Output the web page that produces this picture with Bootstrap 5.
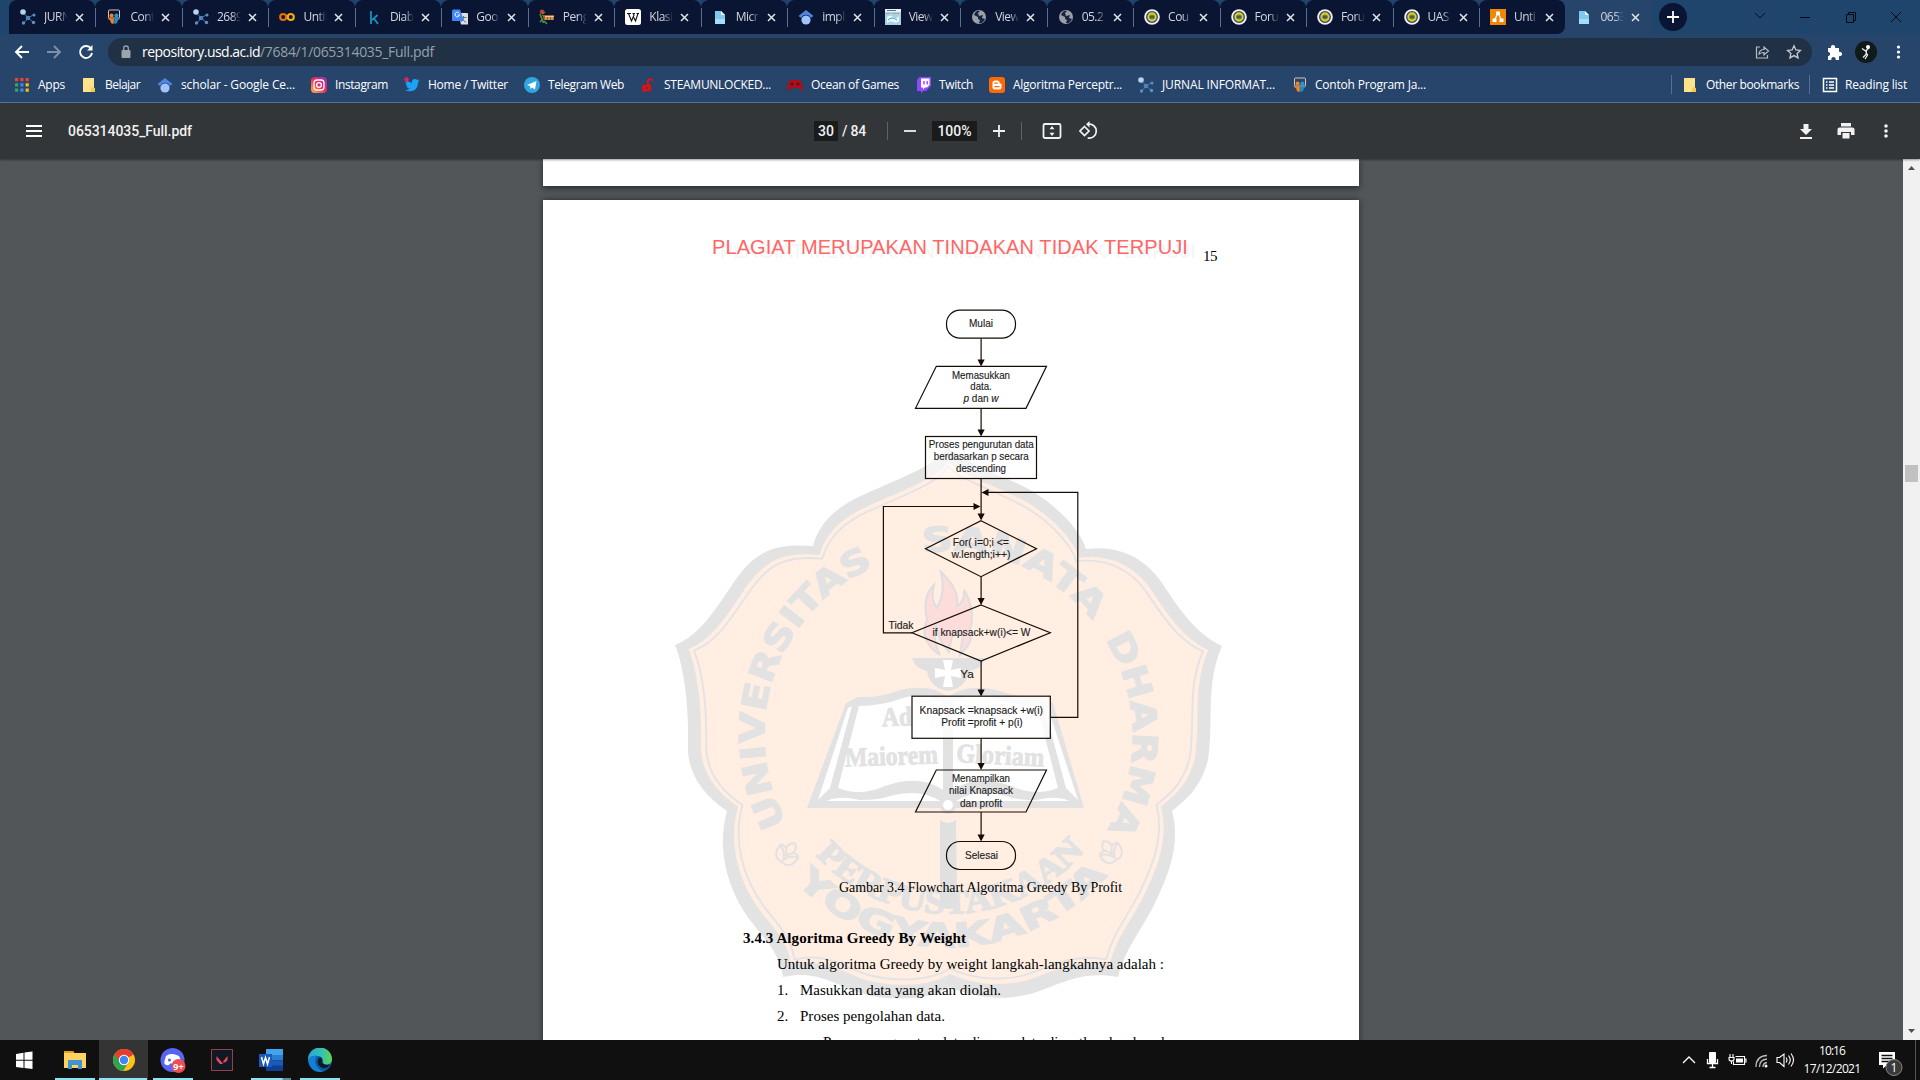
<!DOCTYPE html>
<html lang="id">
<head>
<meta charset="utf-8">
<title>065314035_Full.pdf</title>
<link rel="stylesheet" href="https://cdn.jsdelivr.net/npm/bootstrap@5.3.0/dist/css/bootstrap.min.css">
<style>
body{width:1920px;height:1080px;overflow:hidden;background:#525659;font-family:"Open Sans","Noto Sans",sans-serif;font-size:12px;line-height:16px;color:#fff}
svg{display:block;flex:none}
.fit{display:inline-block;white-space:nowrap;flex:none}
.tabstrip{height:34px;background:#20456c;padding-left:9px}
.btab{width:86.47px;height:34px;background:#0a1433;border-radius:8px 8px 0 0;padding-left:11px;flex:none;position:relative;color:#d3d6dc}
.btab.current{background:#27446b}
.btab.before-current{border-bottom-right-radius:8px}
.btab .cap{width:24px;margin-left:8px;overflow:hidden;white-space:nowrap;-webkit-mask-image:linear-gradient(90deg,#000 60%,transparent);mask-image:linear-gradient(90deg,#000 60%,transparent);letter-spacing:-.5px}
.btab .x{margin-left:7px}
.tab-bg{background:#27446b}
.newtab{width:28px;height:28px;background:#0a1433;margin-left:7px}
.winctl{margin-left:66px;gap:31.5px;color:#050a12}
.navline{height:36px;background:#27446b;padding-left:14px}
.omni{width:1704px;height:28px;border-radius:14px;background:#213145;margin-left:14px;padding:0 10px 0 12px;font-size:14px}
.omni .rest{color:#93a0ad}
.marks{height:33px;background:#27446b;border-bottom:1px solid #5a7797;padding:0 0 3px 14px}
.bm{flex:none}
.vline{width:1px;height:19px;background:#58708f}
.pdfbar{height:56px;background:#323639;font-family:Roboto,sans-serif;font-weight:500;font-size:14px;color:#f1f1f1;padding-left:26px;position:relative;z-index:2;box-shadow:0 1px 2px #0006}
.field{background:#191b1c;height:20px;line-height:20px;text-align:center}
.pdfbar .vline{background:#5f6265;height:18px}
.viewer{height:881px;background:#525659}
.sheets{width:816px;margin-left:543px}
.sheet-prev{height:27px;background:#fff;box-shadow:0 2px 6px #0008}
.sheet{height:854px;margin-top:14px;background:#fff;position:relative;box-shadow:0 0 6px #0008;overflow:hidden;color:#000;font-family:"Liberation Serif",serif;font-size:15px;line-height:26px}
.sheet>.art{position:absolute;left:0;top:0}
.sheet .txt{position:relative}
.heading-red{font-family:"Liberation Sans",sans-serif;font-size:20px;color:#f66;margin:34px 0 0 169px;line-height:26px;text-shadow:8px 4px 0 #f5f5f5}
.pageno{margin:43px 0 0 15px;height:26px;letter-spacing:-.5px}
.caption{margin:606px 0 0 296px;height:26px;font-size:14px}
.body-copy{margin:24px 0 0 200px}
.indent{padding-left:34px}
.scroll{width:17px;background:#f1f1f1}
.thumb{width:13px;height:17px;background:#c1c1c1}
.task{height:40px;background:#101010}
.slot{width:49px;height:40px;position:relative;flex:none}
.slot.on::after{content:"";position:absolute;bottom:0;left:4.5px;width:40px;height:2px;background:#8ee3f0}
.slot.live{background:#343434}
.slot.live::after{left:0;width:48px}
.slot.word::after{width:40px;background:linear-gradient(90deg,#8ee3f0 31px,#5b8f97 32px)}
.clock{width:70px;line-height:18px;padding-top:2px}
</style>
<script src="https://cdn.jsdelivr.net/npm/bootstrap@5.3.0/dist/js/bootstrap.bundle.min.js"></script>
</head>
<body>
<svg width="0" height="0" class="position-absolute">
<symbol id="net" viewBox="0 0 16 16"><path d="M3 3l5 6 5-3M8 9l-4 5M8 9l5 4" stroke="#4878ab" stroke-width="1" fill="none"/><circle cx="3" cy="3" r="2.8" fill="#b5d5ee"/><circle cx="8" cy="9" r="2.3" fill="#4f83b8"/><circle cx="14" cy="6" r="1.5" fill="#5c91c4"/><circle cx="3.5" cy="14" r="1.7" fill="#5c91c4"/><circle cx="13.5" cy="13.5" r="1.7" fill="#5c91c4"/></symbol>
<symbol id="ss" viewBox="0 0 16 16"><rect x="2.5" y="1" width="11" height="8" rx="1" fill="none" stroke="#d8c8b0"/><circle cx="5.600" cy="6.500" r="2" fill="#f58220"/><circle cx="10.400" cy="6.500" r="2" fill="#1e9bd7"/><path d="M1.500 8.500q3 2 6.300.700V14.500q-3 1-3.500-3Q2 10.500 1.500 8.500z" fill="#f58220"/><path d="M14.500 8.500q-3 2-6.300.700V14.500q3 1 3.500-3Q14 10.500 14.500 8.500z" fill="#1e8fc7"/></symbol>
<symbol id="co" viewBox="0 0 16 16"><circle cx="4.200" cy="8" r="3" fill="none" stroke="#e8710a" stroke-width="2.200"/><circle cx="11.800" cy="8" r="3" fill="none" stroke="#f9ab00" stroke-width="2.200"/></symbol>
<symbol id="kg" viewBox="0 0 16 16"><path d="M5 2v13M11.500 6L6 11.200M8 9.500l4 5.500" stroke="#1496bb" stroke-width="1.800" fill="none"/></symbol>
<symbol id="tr" viewBox="0 0 16 16"><path d="M6 4h9a1 1 0 011 1v10.500H9z" fill="#dcdfe3"/><path d="M8.500 8.500h6M11.500 7v1.500q0 3-3 4.500M10 10l4 3.500" stroke="#70757a" fill="none"/><path d="M1 .5h7l4 11.500H1a1 1 0 01-1-1V1.500z" fill="#4285f4"/><path d="M7.300 4.300a2.300 2.300 0 10.300 1.700H5.500" stroke="#fff" fill="none"/></symbol>
<symbol id="jm" viewBox="0 0 16 16"><path d="M3 6h12v5H5z" fill="#a8602a"/><circle cx="3" cy="2.800" r="2.200" fill="#d33a2c"/><path d="M1 5l3.500 9M4 10l-3 3m4-1l3 3M3 5l3-2" stroke="#4a9a3a" stroke-width="1.500"/><path d="M6 7.500h9M7 8v3M10 8v3M13 8v3" stroke="#f0c890"/></symbol>
<symbol id="wk" viewBox="0 0 16 16"><rect width="16" height="16" rx="2.500" fill="#fff"/><path d="M2 4.500h4M7.500 4.500H10M11.500 4.500H14M3.500 4.500L6.500 12 9 6 8 4.500M8 7l2.500 5 2.500-7.500" stroke="#111" stroke-width="1.100" fill="none"/></symbol>
<symbol id="doc" viewBox="0 0 16 16"><path d="M3 2h6l4 4v9H3z" fill="#7fc8ee"/><path d="M9 2l4 4H9z" fill="#e5f5fd"/><path d="M3 10h10v5H3z" fill="#a5dcf8"/></symbol>
<symbol id="sch" viewBox="0 0 16 16"><circle cx="8" cy="11" r="4.600" fill="#a0c3ff"/><path d="M8 1l7.500 6-2.800 2a5 5 0 00-9.400 0L.5 7z" fill="#4f86e4"/></symbol>
<symbol id="vw" viewBox="0 0 16 16"><rect width="16" height="16" fill="#a9d3e4"/><path d="M0 0h16v3H0z" fill="#e8f3f5"/><path d="M1 4.500h4M7 4.500h7" stroke="#c99"/><path d="M2 8q3-3 6 0t6-1v5q-3 3-6 1t-6 1z" fill="#eaf8ff"/><path d="M3 11q4-4 9 0" stroke="#3c9fc5" fill="none"/><path d="M2 1.500h9" stroke="#3b7ca8"/></symbol>
<symbol id="gl" viewBox="0 0 16 16"><circle cx="8" cy="8" r="7" fill="#9aa0a6"/><path d="M3 6l4 2v2l2 1-1 3q4 1 6-4l-3-1 1-3-4 1-1-3 2-2q-4-1-6 4z" fill="#182442"/></symbol>
<symbol id="usd" viewBox="0 0 16 16"><circle cx="8" cy="8" r="7.800" fill="#f4f1e2"/><circle cx="8" cy="8" r="5.300" fill="#dcd318" stroke="#324291" stroke-width="1.300"/><path d="M5.500 6.500q2.500-2 5 0v3q-2.500 2-5 0z" fill="#69823c"/><path d="M5.500 8h5" stroke="#263a79"/></symbol>
<symbol id="dio" viewBox="0 0 16 16"><rect width="16" height="16" fill="#f08705"/><path d="M8 4L4.500 11M8 4l3.500 7" stroke="#fff" stroke-width="1.300"/><path d="M6 2.500h4v3.500H6zM2.500 9.500h4V13h-4zM9.500 9.500h4V13h-4z" fill="#fff"/></symbol>
<symbol id="apps" viewBox="0 0 16 16"><g fill="#ea4335"><path d="M1 1h3.200v3.200H1zM6.300 1h3.200v3.200H6.300zM11.600 1h3.200v3.200h-3.200z"/></g><path d="M1 6.300h3.200v3.200H1zM1 11.600h3.200v3.200H1z" fill="#34a853"/><path d="M6.300 6.300h3.200v3.200H6.300zM6.300 11.600h3.200v3.200H6.300z" fill="#4285f4"/><path d="M11.600 6.300h3.200v3.200h-3.200zM11.600 11.600h3.200v3.200h-3.200z" fill="#fbbc04"/></symbol>
<symbol id="fo" viewBox="0 0 16 16"><path d="M0 1h11v14H0z" fill="#ffe28a"/><path d="M9 10l3 1v4H7.500z" fill="#f6c945"/></symbol>
<symbol id="ig" viewBox="0 0 16 16"><rect width="16" height="16" rx="4" fill="url(#igg)"/><rect x="3" y="3" width="10" height="10" rx="3" fill="none" stroke="#fff" stroke-width="1.300"/><circle cx="8" cy="8" r="2.400" fill="none" stroke="#fff" stroke-width="1.300"/></symbol>
<defs><linearGradient id="igg" x1="0" y1="1" x2="1" y2="0"><stop offset="0" stop-color="#fdc042"/><stop offset=".5" stop-color="#ee2a5b"/><stop offset="1" stop-color="#8237c8"/></linearGradient></defs>
<symbol id="tw" viewBox="0 0 16 16"><path d="M1 13q3 .2 4.500-1.200-2.200-.3-3-2.200h1.300Q1.500 8.500 1.600 6.300l1.300.4Q1 4.800 2.200 2.500 4.500 5.500 8 5.700 7.500 2 11 2q1.200 0 2.200 1l2-.8-1.200 1.700 1.700-.4-1.600 1.700Q14 13.500 6.500 14.200 3.500 14.500 1 13z" fill="#1da1f2"/><circle cx="2.500" cy="2.500" r="2.200" fill="#e0245e"/></symbol>
<symbol id="tg" viewBox="0 0 16 16"><circle cx="8" cy="8" r="8" fill="#2fa6df"/><path d="M3 8l9.500-4L11 12.500 8 10.500 6.500 12 6 9z" fill="#fff"/></symbol>
<symbol id="un" viewBox="0 0 16 16"><path d="M0 8.500l8.500-1.500 1 6.500-8.500 1.500z" fill="#f00c0c"/><path d="M6 7.500l-.3-2.500q0-2.500 2.300-2.800 2.200 0 2.500 2" stroke="#f00c0c" stroke-width="1.700" fill="none"/><circle cx="4.800" cy="11" r="1.200" fill="#27446b"/></symbol>
<symbol id="pad" viewBox="0 0 16 16"><path d="M3 3h10q3 4 3 9 0 2-2 1.500L11.500 11h-7L2 13.500Q0 14 0 12 0 7 3 3z" fill="#a90f1a"/><circle cx="5" cy="7" r="1.300" fill="#5c0a14"/><circle cx="11" cy="7" r="1.300" fill="#5c0a14"/></symbol>
<symbol id="tch" viewBox="0 0 16 16"><path d="M3.500 0H15v9l-5 5H7.500L5 16.500V14H1V3z" fill="#9146ff"/><path d="M5 1.500h8.500V8L11 10.500H9L7 12.500v-2H5z" fill="#fff"/><path d="M8 4v3.500M11.200 4v3.500" stroke="#9146ff" stroke-width="1.400"/></symbol>
<symbol id="blg" viewBox="0 0 16 16"><rect width="16" height="16" rx="3" fill="#ff6a00"/><path d="M3.500 6q0-2.500 2.500-2.500h2.500q2 0 2.300 2.500.2.700 1.200.8.500 0 .5 1V10q0 2.500-2.500 2.500H6Q3.500 12.500 3.500 10z" fill="#fff"/><path d="M6 6.200h2.200M6 9.700h4" stroke="#ff6a00" stroke-width="1.300" stroke-linecap="round"/></symbol>
<symbol id="rd" viewBox="0 0 16 16"><rect x="1.500" y="1.500" width="13" height="13" fill="none" stroke="#fff" stroke-width="1.500"/><path d="M4 5h1.500M7 5h5M4 8h1.500M7 8h5M4 11h1.500M7 11h5" stroke="#fff" stroke-width="1.300"/></symbol>
</svg>

<div class="d-flex flex-column">
<header>
 <div class="tabstrip d-flex align-items-center">
  <div id="tabs" class="d-flex"></div>
  <div class="newtab rounded-circle d-flex align-items-center justify-content-center"><svg width="14" height="14"><path d="M7 1v12M1 7h12" stroke="#fff" stroke-width="1.800"/></svg></div>
  <div class="winctl d-flex align-items-center">
   <svg width="14" height="12" stroke="currentColor" fill="none"><path d="M2 2l5 5 5-5"/></svg>
   <svg width="14" height="12" stroke="currentColor"><path d="M2 6.500h10"/></svg>
   <svg width="14" height="12" stroke="currentColor" fill="none"><path d="M2.500 3.500h7v8h-7zM4.500 3.500v-2h7v8h-2"/></svg>
   <svg width="14" height="12" stroke="currentColor"><path d="M2 1l10 10M12 1L2 11"/></svg>
  </div>
 </div>
 <div class="navline d-flex align-items-center">
  <svg width="80" height="20" fill="none" stroke="#fff" stroke-width="1.900"><path d="M15 10H2.500M8 4l-6 6 6 6"/><path d="M33 10h12.500M40 4l6 6-6 6" stroke="#7e90a8"/><path d="M77 6.500A6 6 0 1078 11"/><path d="M78.500 3v5.500H73z" fill="#fff" stroke="none"/></svg>
  <div class="omni d-flex align-items-center">
   <svg width="12" height="16"><rect x="1.500" y="6" width="9" height="8" rx="1" fill="#9ba3ad"/><path d="M3.700 6V4q0-2 2.300-2t2.300 2v2" stroke="#9ba3ad" stroke-width="1.300" fill="none"/></svg>
   <span class="fit" style="margin-left:10px" data-w="118">repository.usd.ac.id</span><span class="fit rest" data-w="174">/7684/1/065314035_Full.pdf</span>
   <div class="ms-auto d-flex" style="gap:16px"><svg width="16" height="16" fill="none" stroke="#b5bec9" stroke-width="1.200"><path d="M6 3H2.500v11h11v-3M5 10q.5-4.500 5-4.500V3l4.500 4-4.500 4V8.500Q7 8.500 5 10z"/></svg>
   <svg width="16" height="16" fill="none" stroke="#c6cdd6" stroke-width="1.300"><path d="M8 1.800l1.900 4.100 4.500.5-3.300 3 .9 4.500L8 11.600l-4 2.300.9-4.500-3.300-3 4.500-.5z"/></svg></div>
  </div>
  <svg class="ms-3" width="90" height="26"><g transform="translate(-2 5)" fill="#fff"><path d="M1 4h4a2.200 2.200 0 114 0h4v4a2.200 2.200 0 110 4v4H9.500a2.200 2.200 0 10-4 0H1v-4a2.200 2.200 0 100-4z"/></g><circle cx="38" cy="13" r="11" fill="#101a18"/><path d="M34 9.500l3.500 2.500L41 9M38.500 11.500l-.5 4-3 3M38 13.500l1.500 2.500-2.500 4" stroke="#eee" stroke-width="1.300" fill="none"/><circle cx="40" cy="8" r="2" fill="#fff"/><g fill="#fff"><circle cx="70.500" cy="8" r="1.600"/><circle cx="70.500" cy="13" r="1.600"/><circle cx="70.500" cy="18" r="1.600"/></g></svg>
 </div>
 <div class="marks d-flex align-items-center" id="marks"></div>
 <div class="pdfbar d-flex align-items-center">
  <svg width="16" height="14" stroke="#fff" stroke-width="2"><path d="M0 2h16M0 7h16M0 12h16"/></svg>
  <span class="fit" style="margin-left:26px" data-w="124">065314035_Full.pdf</span>
  <div class="d-flex align-items-center" style="margin-left:622px">
   <div class="field" style="width:24px">30</div><span class="fit ms-1" data-w="24">/ 84</span>
   <div class="vline" style="margin-left:21px"></div>
   <svg style="margin-left:16px" width="12" height="12"><path d="M0 6h12" stroke="#f1f1f1" stroke-width="1.800"/></svg>
   <div class="field" style="width:45px;margin-left:16px">100%</div>
   <svg style="margin-left:16px" width="12" height="12"><path d="M0 6h12M6 0v12" stroke="#f1f1f1" stroke-width="1.800"/></svg>
   <div class="vline" style="margin-left:16px"></div>
   <svg style="margin-left:20px" width="20" height="18"><rect x="1.500" y="2" width="17" height="14" rx="1.500" fill="none" stroke="#f1f1f1" stroke-width="1.800"/><path d="M10 4l2.500 3.300h-5zM10 14l2.500-3.300h-5z" fill="#f1f1f1"/></svg>
   <svg style="margin-left:17px" width="20" height="20" fill="none" stroke="#f1f1f1" stroke-width="1.700"><path d="M5.500 5.500L10 10l-4.500 4.500L1 10z"/><path d="M9 3.200a7 7 0 11-.3 13.700"/><path d="M10.500 0v6.500L7 3.300z" fill="#f1f1f1" stroke="none"/></svg>
  </div>
  <div class="ms-auto d-flex align-items-center" style="padding-right:30px;gap:25px">
   <svg width="14" height="18" fill="#f1f1f1" style="margin-right:-1px"><path d="M4.500 2h5v5H13l-6 6-6-6h3.500zM1 15h12v2H1z"/></svg>
   <svg width="18" height="18" fill="#f1f1f1"><path d="M4 1h10v3.500H4zM2.500 5.500h13q2 0 2 2V13H14v-3H4v3H.5V7.500q0-2 2-2zM5.500 11h7v5.500h-7z"/></svg>
   <svg width="10" height="18" fill="#f1f1f1"><circle cx="6" cy="4" r="1.800"/><circle cx="6" cy="9" r="1.800"/><circle cx="6" cy="14" r="1.800"/></svg>
  </div>
 </div>
</header>

<main class="viewer d-flex justify-content-between overflow-hidden">
 <div class="sheets">
  <div class="sheet-prev"></div>
  <article class="sheet">
   <svg class="art" width="816" height="854" viewBox="543 200 816 854">
    <defs>
     <path id="crest" d="M948 447C960 462 1010 477 1035 493C1065 512 1082 535 1086 549C1120 545 1143 558 1160 580C1180 610 1195 633 1222 646C1205 685 1214 720 1208 760C1200 790 1185 800 1172 811C1180 840 1172 870 1152 909C1138 935 1125 950 1118 977C1080 970 1060 985 1030 994C1000 1002 970 996 950 987C930 1000 890 1002 860 993C830 982 815 970 783 977C778 950 765 940 750 920C728 890 716 850 727 811C700 793 687 770 688 745C689 710 685 670 675 645C700 635 715 610 732 585C755 550 775 543 813 546C820 520 840 505 865 494C900 478 938 465 948 447Z"/>
     <path id="ringA" d="M786.400 822.900A184 184 0 0 1 894.200 559"/>
     <path id="ringB" d="M922.400 552.800A184 184 0 0 1 1095 624.300"/>
     <path id="ringC" d="M1105 639.300A184 184 0 0 1 1106 831.700"/>
     <path id="ringD" d="M815.700 855A179 179 0 0 0 1085.100 849.800"/>
     <path id="ringE" d="M795.500 881.900A212 212 0 0 0 1107.900 874.200"/>
     <g id="petal" fill="none" stroke="#e2e2e3" stroke-width="2"><path d="M0-12Q6-8 4-3Q9-5 11-2Q12 8 5 11H-5Q-12 8-11-2Q-9-5-4-3Q-6-8 0-12ZM-11-2Q-3 0 0 8Q3 0 11-2M-4-3L0 3 4-3"/></g>
    </defs>
    <g id="watermark">
     <use href="#crest" fill="#e3e3e3"/>
     <use href="#crest" fill="#ffeee1" transform="translate(948 725) scale(.95) translate(-948 -725)"/>
     <use href="#crest" fill="none" stroke="#e3e3e6" stroke-width="2" transform="translate(948 725) scale(.93) translate(-948 -725)"/>
     <g fill="#e2e2e3" stroke="#e2e2e3" stroke-width="1.200" font-family="DejaVu Sans, sans-serif" font-weight="700" font-size="34">
      <text><textPath href="#ringA" textLength="304" lengthAdjust="spacingAndGlyphs">UNIVERSITAS</textPath></text>
      <text><textPath href="#ringB" textLength="191" lengthAdjust="spacingAndGlyphs">SANATA</textPath></text>
      <text><textPath href="#ringC" textLength="200" lengthAdjust="spacingAndGlyphs">DHARMA</textPath></text>
      <text font-family="Liberation Serif, serif" font-size="34" stroke-width="1.500"><textPath href="#ringD" textLength="304" lengthAdjust="spacingAndGlyphs">PERPUSTAKAAN</textPath></text>
      <text font-size="33"><textPath href="#ringE" textLength="350" lengthAdjust="spacingAndGlyphs">YOGYAKARTA</textPath></text>
     </g>
     <use href="#petal" transform="translate(788 853) rotate(35)"/><use href="#petal" transform="translate(1110 851) rotate(-35)"/>
     <g stroke="#dedee0" stroke-width="2" fill="#fddcdc"><path d="M940 655Q918 640 927 620Q922 596 934 585Q930 600 937 608Q946 592 941 572Q960 590 957 606Q965 602 964 590Q976 610 970 630Q975 640 960 655L963 635Q952 625 949 652Q938 640 936 625Q932 640 940 655Z"/></g>
     <path d="M912 658H985Q982 669 969 671Q966 688 948 691Q930 688 927 671Q915 669 912 658Z" fill="#e0e0e0"/>
     <path d="M943 660h10l-2 10 10-2v10l-10-2 2 11h-10l2-11-10 2v-10l10 2z" fill="#fff"/>
     <path d="M807 808L846 703L858 697Q880 698 900 690Q930 683 948 697Q967 683 996 690Q1018 698 1040 697L1053 703L1084 808Z" fill="#e2e2e3"/>
     <path d="M859 706L838 788Q860 797 885 786Q920 774 943 790V703Q925 691 900 699Q880 706 859 706ZM1037 706L1058 788Q1036 797 1011 786Q976 774 953 790V703Q971 691 996 699Q1016 706 1037 706Z" fill="#fff"/>
     <path d="M852 706L830 788L818 800L848 708ZM827 801Q838 795 860 800Q880 800 890 796Q920 788 940 801ZM1044 706L1066 788L1078 800L1048 708ZM1069 801Q1058 795 1036 800Q1016 800 1006 796Q976 788 956 801Z" fill="#fff"/>
     <g fill="#e2e2e3" stroke="#e2e2e3" stroke-width=".8" font-family="Liberation Serif, serif" font-weight="700" font-size="27"><text x="882" y="726" textLength="30" lengthAdjust="spacingAndGlyphs" transform="rotate(-2 890 720)">Ad</text><text x="845" y="765" textLength="93" lengthAdjust="spacingAndGlyphs" transform="rotate(-2 890 760)">Maiorem</text><text x="966" y="724">Dei</text><text x="956" y="762" textLength="88" lengthAdjust="spacingAndGlyphs" transform="rotate(3 956 760)">Gloriam</text></g>
     <path d="M940 820Q948 826 956 820L957 905Q948 913 940 905Z" fill="#e0e0e1"/><circle cx="948" cy="806" r="8" fill="#e2e2e3"/><circle cx="948" cy="805" r="5" fill="#fff"/>
    </g>
    <g id="flow" fill="none" stroke="#160c05" stroke-width="1.200">
     <rect x="946.500" y="310.200" width="69" height="28" rx="13.500"/>
     <path d="M936.300 366.300H1046.500L1026 408.300H915.500Z"/>
     <rect x="925.500" y="436.500" width="111" height="42" fill="#fff" fill-opacity=".6"/>
     <path d="M981 520.700L1036.500 548.700L981 576.700L925.500 548.700ZM981 605L1050.300 632.800L981 661L912 632.800Z"/>
     <rect x="912" y="696.200" width="138.300" height="42.100" fill="#fff" fill-opacity=".82"/>
     <path d="M936.300 770H1046.500L1026 812H915.500Z"/>
     <rect x="946.500" y="841.500" width="69" height="28" rx="13.500"/>
     <path d="M981.100 338.500V362M981.100 408.500V432M981.100 478.500V515M981.100 577V600M981.100 661V692M981.100 738.500V766M981.100 812V836M1050.500 717.300H1077.800V492.400H986M912 632.800H883.400V506.500H976"/>
     <path fill="#160c05" stroke="none" d="M977.500 359.500h7.200l-3.600 7zM977.500 429.500h7.200l-3.600 7zM977.500 513.500h7.200l-3.600 7zM977.500 598h7.200l-3.600 7zM977.500 689.500h7.200l-3.600 7zM977.500 763h7.200l-3.600 7zM977.500 834.500h7.200l-3.600 7zM981.500 492.500l7-3.400v6.800zM980.500 506.500l-7-3.400v6.800z"/>
    </g>
    <g fill="#1c1c1c" stroke="#1c1c1c" stroke-width=".15" font-family="Liberation Sans, sans-serif" font-size="11.500" text-anchor="middle">
     <text x="981" y="326.700" textLength="24" lengthAdjust="spacingAndGlyphs">Mulai</text>
     <text x="981" y="379" textLength="58" lengthAdjust="spacingAndGlyphs">Memasukkan</text><text x="981" y="390" textLength="21.500" lengthAdjust="spacingAndGlyphs">data.</text>
     <text x="981" y="401.500" textLength="35" lengthAdjust="spacingAndGlyphs"><tspan font-style="italic">p</tspan> dan <tspan font-style="italic">w</tspan></text>
     <text x="981.300" y="448.300" textLength="105" lengthAdjust="spacingAndGlyphs">Proses pengurutan data</text><text x="981.300" y="460.200" textLength="95" lengthAdjust="spacingAndGlyphs">berdasarkan p secara</text><text x="981" y="472.200" textLength="50" lengthAdjust="spacingAndGlyphs">descending</text>
     <text x="980.800" y="546" textLength="56" lengthAdjust="spacingAndGlyphs">For( i=0;i &lt;=</text><text x="981" y="558" textLength="59" lengthAdjust="spacingAndGlyphs">w.length;i++)</text>
     <text x="981.500" y="636" textLength="98" lengthAdjust="spacingAndGlyphs">if knapsack+w(i)&lt;= W</text>
     <text x="901" y="628.500" textLength="25" lengthAdjust="spacingAndGlyphs">Tidak</text><text x="967" y="677.500" textLength="13.500" lengthAdjust="spacingAndGlyphs">Ya</text>
     <text x="981.300" y="714" textLength="123.500" lengthAdjust="spacingAndGlyphs">Knapsack =knapsack +w(i)</text><text x="982" y="726" textLength="81.500" lengthAdjust="spacingAndGlyphs">Profit =profit + p(i)</text>
     <text x="981" y="782.300" textLength="58" lengthAdjust="spacingAndGlyphs">Menampilkan</text><text x="981" y="794" textLength="64" lengthAdjust="spacingAndGlyphs">nilai Knapsack</text><text x="981" y="806.500" textLength="42" lengthAdjust="spacingAndGlyphs">dan profit</text>
     <text x="981.500" y="858.800" textLength="33" lengthAdjust="spacingAndGlyphs">Selesai</text>
    </g>
   </svg>
   <div class="txt">
    <div class="d-flex align-items-start"><div class="heading-red fit" data-w="476">PLAGIAT MERUPAKAN TINDAKAN TIDAK TERPUJI</div><div class="pageno">15</div></div>
    <div class="caption"><span class="fit" data-w="283">Gambar 3.4 Flowchart Algoritma Greedy By Profit</span></div>
    <div class="body-copy">
     <div class="fw-bold"><span class="fit" data-w="223">3.4.3 Algoritma Greedy By Weight</span></div>
     <div class="indent"><span class="fit" data-w="387">Untuk algoritma Greedy by weight langkah-langkahnya adalah :</span></div>
     <div class="indent d-flex"><span style="width:23px">1.</span><span class="fit" data-w="201">Masukkan data yang akan diolah.</span></div>
     <div class="indent d-flex"><span style="width:23px">2.</span><span class="fit" data-w="145">Proses pengolahan data.</span></div>
     <div style="padding-left:80px"><span class="fit" data-w="360">Proses pengurutan data dimana data diurutkan berdasarkan</span></div>
    </div>
   </div>
  </article>
 </div>
 <div class="scroll d-flex flex-column align-items-center"><svg width="9" height="17"><path d="M1 11h7L4.500 7z" fill="#505050"/></svg><div class="thumb" style="margin-top:289px"></div><svg class="mt-auto" width="9" height="17"><path d="M1 6h7L4.500 10z" fill="#505050"/></svg></div>
</main>

<footer class="task d-flex">
 <div class="slot d-flex align-items-center justify-content-center" style="width:50px"><svg width="18" height="18" fill="#fff"><path d="M0 3l7.500-1.200v7H0zM8.500 1.600L16.500.5v8.300h-8zM0 9.800h7.500V17L0 16zM8.500 9.800h8V18l-8-1z"/></svg></div>
 <div class="slot on d-flex align-items-center justify-content-center"><svg width="22" height="20"><path d="M0 1h9l1.500 2H22v15H0z" fill="#ffd363"/><path d="M0 1h9l1 2H0z" fill="#e6a210"/><path d="M4 10h14v9h-4v-4H8v4H4z" fill="#3d95d3"/></svg></div>
 <div class="slot on live d-flex align-items-center justify-content-center"><svg width="24" height="24" viewBox="0 0 24 24"><circle cx="12" cy="12" r="11" fill="#fbc116"/><path d="M12 12L2.500 6.500A11 11 0 0121.500 6.500Z" fill="#e33b2e"/><path d="M2.500 6.500A11 11 0 0011 23L16.500 14.500 12 12z" fill="#31a350"/><path d="M12 7h10a11 11 0 00-.5-1h-19L7 13z" fill="#de4335"/><circle cx="12" cy="12" r="5.200" fill="#fff"/><circle cx="12" cy="12" r="4.200" fill="#4285f4"/></svg></div>
 <div class="slot on d-flex align-items-center justify-content-center"><svg width="26" height="28"><circle cx="12.500" cy="14" r="12" fill="#5865f2"/><path d="M6 10q3-2.500 6.500-2T19 10q2.500 5 1.500 8-3 2-4.500 1l-1-1.500h-5L9 19q-1.500 1-4.500-1Q4 15 6 10z" fill="#fff"/><circle cx="9.500" cy="14" r="1.600" fill="#5865f2"/><circle cx="18.500" cy="20" r="7" fill="#ed4e50"/><text x="18.500" y="23.500" text-anchor="middle" font-size="9" font-weight="700" fill="#fff">9+</text></svg></div>
 <div class="slot d-flex align-items-center justify-content-center"><svg width="22" height="22"><rect x=".5" y=".5" width="21" height="21" fill="#111a24" stroke="#96404a"/><path d="M5.500 7v4l3.500 4h3.200zM16.500 7v4l-2 2.300h-3z" fill="#f9475a"/></svg></div>
 <div class="slot on word d-flex align-items-center justify-content-center"><svg width="24" height="24"><path d="M7 1h17v6H7z" fill="#41a5ee"/><path d="M7 7h17v5.500H7z" fill="#2b7cd3"/><path d="M7 12.500h17V18H7z" fill="#185abd"/><path d="M7 17.500h17V23H7z" fill="#103f91"/><rect y="6" width="13" height="13" fill="#185abd"/><path d="M2.500 9l2 7 2-6.500 2 6.500 2-7" stroke="#fff" stroke-width="1.500" fill="none"/></svg></div>
 <div class="slot on d-flex align-items-center justify-content-center"><svg width="24" height="24"><defs><linearGradient id="eg"><stop offset="0" stop-color="#2aa6dc"/><stop offset=".6" stop-color="#35c1b1"/><stop offset="1" stop-color="#63d84a"/></linearGradient></defs><circle cx="12" cy="12" r="12" fill="#0c59a4"/><path d="M0 12A12 12 0 0124 11Q24 16 19 16.500 14 16.500 14.500 13.500 15.500 9 10 8 3 7 0 12z" fill="url(#eg)"/><path d="M0 12Q3 7 9 8 5.500 12 8.500 18 11 22 15 23.500 3 26 0 12z" fill="#1380d3"/><path d="M14.500 13q-1 3 4 4 3 0 4-1.500L20 19q-6 3-9.500-2Q8 12 12 9q2.500 1 2.500 4z" fill="#101a26"/></svg></div>
 <div class="ms-auto d-flex">
  <svg width="118" height="40" fill="none" stroke="#fff" stroke-width="1.300"><path d="M4 23l6-6 6 6"/><rect x="30" y="12" width="7" height="11" rx="1" fill="#fff" stroke="none"/><path d="M28.500 19v4.500h10V19M33.500 24v3M30.500 27.500h6"/><path d="M56.500 16.500h9v8h-11v-3M65.500 19h1.500v3h-1.500M51 14v3M54 14v3M50 17.500h5v1.500q0 2-2.500 2t-2.500-2zM52.500 21v3" stroke-width="1.100"/><path d="M57 18.500h7v4h-7z" fill="#fff" stroke="none"/><g stroke="#bbb"><path d="M77 27q0-11 11-11.500M80.500 27q0-7.500 7.500-8M84 27q0-4 4-4.500"/></g><circle cx="87" cy="26" r="1.500" fill="#fff" stroke="none"/><path d="M98 17.500h2.500L105 14v12.500l-4.500-4H98zM107 17.500q2 2.500 0 5M109.500 15.500q3.500 4.500 0 9M112 13.500q5 6.500 0 13" stroke-width="1.100"/></svg>
  <div class="clock text-center"><div><span class="fit" data-w="26">10:16</span></div><div><span class="fit" data-w="57">17/12/2021</span></div></div>
  <svg width="53" height="40"><path d="M12 12h16v13h-8l-4 3.500V25h-4z" fill="#fff"/><path d="M14.500 15.500h11M14.500 18.500h11M14.500 21.500h11" stroke="#111" stroke-width="1.300"/><circle cx="27" cy="27.500" r="8" fill="#3a3a3a" stroke="#888"/><text x="27" y="32" text-anchor="middle" font-size="12" fill="#fff">1</text><path d="M48.500 0v40" stroke="#555"/></svg>
 </div>
</footer>
</div>
<script>
const icon = id => `<svg width="16" height="16"><use href="#${id}"/></svg>`;
const tabs = [['net','JURN'],['ss','Cont'],['net','2689'],['co','Untit'],['kg','Diab'],['tr','Goo'],['jm','Peng'],['wk','Klasi'],['doc','Micr'],['sch','impl'],['vw','View'],['gl','View'],['gl','05.2'],['usd','Cou'],['usd','Foru'],['usd','Foru'],['usd','UAS'],['dio','Unti'],['doc','0653']];
document.getElementById('tabs').innerHTML = tabs.map(([i,t],n) =>
 `<div class="${n>=17?'tab-bg':''}"><div class="btab d-flex align-items-center ${n==18?'current':''} ${n==17?'before-current':''}">${icon(i)}<span class="cap">${t}</span><svg class="x" width="9" height="9"><path d="M1 1l7 7M8 1L1 8" stroke="#e4e6ea" stroke-width="1.500"/></svg></div></div>`).join('');
document.querySelectorAll('#tabs .btab').forEach((t,n)=>{ if(n && n<18){ const s=document.createElement('i'); s.className='position-absolute vline start-0'; s.style.top='8px'; t.append(s);} });
// icon id, label, label width, slot width, gap between icon and label
const marks = [['apps','Apps',27,69,8],['fo','Belajar',35,74,6],['sch','scholar - Google Ce...',114,154,8],['ig','Instagram',53,93,8],['tw','Home / Twitter',80,120,8],['tg','Telegram Web',76,118,8],['un','STEAMUNLOCKED...',107,145,6],['pad','Ocean of Games',88,129,8],['tch','Twitch',34,73,7],['blg','Algoritma Perceptr...',109,149,8],['net','JURNAL INFORMAT...',113,154,8],['ss','Contoh Program Ja...',111,379,7],['|'],['fo','Other bookmarks',93,125,6],['|'],['rd','Reading list',62,90,7]];
document.getElementById('marks').innerHTML = marks.map(m => m[0]=='|' ? '<div class="vline flex-shrink-0" style="margin-right:12px"></div>' :
 `<div class="bm d-flex align-items-center" style="width:${m[3]}px">${icon(m[0])}<span class="fit" data-w="${m[2]}" style="margin-left:${m[4]}px">${m[1]}</span></div>`).join('');
// tune tracking so every label takes its nominal width
document.querySelectorAll('.fit').forEach(e=>{
 e.style.letterSpacing=((+e.dataset.w-e.getBoundingClientRect().width)/e.textContent.length)+'px';
});
</script>
</body>
</html>
